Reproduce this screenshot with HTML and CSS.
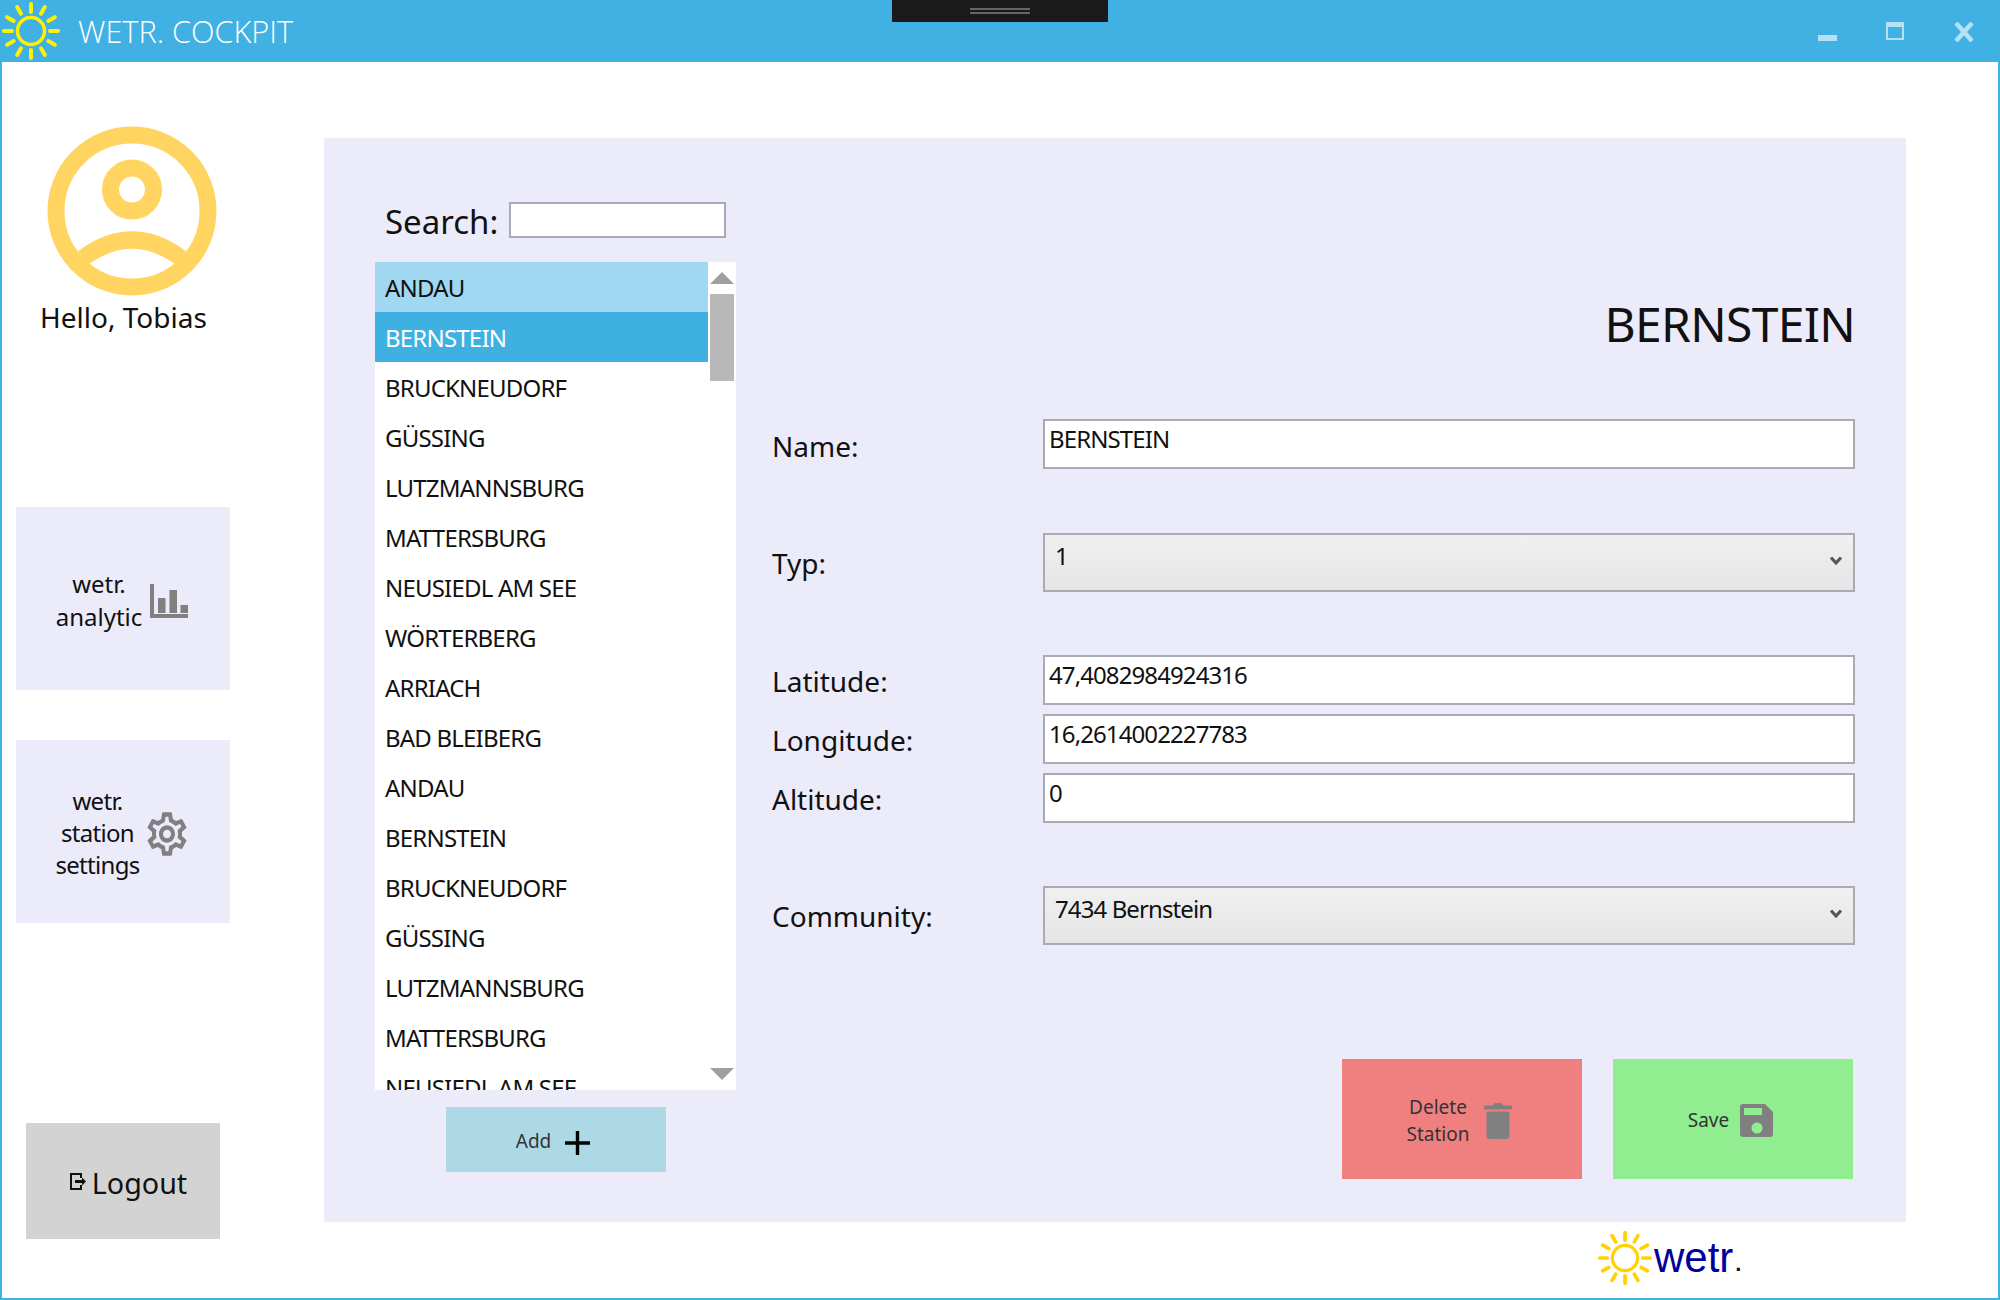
FILE: index.html
```html
<!DOCTYPE html>
<html lang="en">
<head>
    <meta charset="UTF-8">
    <meta name="viewport" content="width=device-width, initial-scale=1.0">
    <title>Wetr. Cockpit</title>
    <link rel="stylesheet" href="styles.css">
</head>
<body>
    <svg class="defs" width="0" height="0">
        <symbol id="sun" viewBox="0 0 62 62">
            <circle cx="31" cy="31" r="13.5" fill="none" stroke="currentColor" stroke-width="3.5"/>
            <path fill="none" stroke="currentColor" stroke-width="4" stroke-linecap="round" d="M31 4V12M31 50V58M4 31H12M50 31H58M41 13.7L44.8 7.1M21 13.7L17.200 7.1M41 48.3L44.8 54.9M21 48.3L17.200 54.9M13.7 21L7.1 17.200M13.7 41L7.1 44.8M48.3 21L54.9 17.200M48.3 41L54.9 44.8"/>
        </symbol>
    </svg>

    <div class="window">
        <header class="titlebar">
            <svg class="title-sun"><use href="#sun"/></svg>
            <span class="title-text">WETR. COCKPIT</span>
            <div class="window-buttons">
                <span class="win-min"></span>
                <span class="win-max"></span>
                <svg class="win-close" width="22" height="20" viewBox="0 0 22 20"><path d="M3 1L19 19M19 1L3 19" fill="none" stroke="#b5e1f5" stroke-width="4.5"/></svg>
            </div>
        </header>
        <div class="dock-handle"><span></span><span></span></div>

        <div class="content">
            <aside class="sidebar">
                <svg class="avatar" width="170" height="170" viewBox="0 0 170 170" fill="none" stroke="#ffd460" stroke-width="17">
                    <circle cx="85" cy="85" r="76"/>
                    <circle cx="85" cy="63.5" r="21.5"/>
                    <path d="M36 132Q85 96 134 132"/>
                </svg>
                <div class="greeting">Hello, Tobias</div>

                <div class="tile tile-analytic">
                    <div class="tile-text">wetr.<br>analytic</div>
                    <svg width="38" height="34" viewBox="0 0 38 34" fill="#808080"><path d="M0 0H4V30H38V34H0ZM8 14H15.5V29H8ZM19.500 6H27V29H19.500ZM30.500 21H38V29H30.500Z"/></svg>
                </div>
                <div class="tile tile-settings">
                    <div class="tile-text">wetr.<br>station<br>settings</div>
                    <svg width="48" height="52" viewBox="0 0 24 24" preserveAspectRatio="none" fill="#808080"><path d="M19.43 12.98c.04-.32.07-.64.07-.98 0-.34-.03-.66-.07-.98l2.11-1.65c.19-.15.24-.42.12-.64l-2-3.46c-.09-.16-.26-.25-.44-.25-.06 0-.12.01-.17.03l-2.49 1c-.52-.4-1.08-.73-1.69-.98l-.38-2.65C14.46 2.18 14.25 2 14 2h-4c-.25 0-.46.18-.49.42l-.38 2.65c-.61.25-1.17.59-1.69.98l-2.49-1c-.06-.02-.12-.03-.18-.03-.17 0-.34.09-.43.25l-2 3.46c-.13.22-.07.49.12.64l2.11 1.65c-.04.32-.07.65-.07.98 0 .33.03.66.07.98l-2.11 1.65c-.19.15-.24.42-.12.64l2 3.46c.09.16.26.25.44.25.06 0 .12-.01.17-.03l2.49-1c.52.4 1.08.73 1.69.98l.38 2.65c.03.24.24.42.49.42h4c.25 0 .46-.18.49-.42l.38-2.65c.61-.25 1.17-.59 1.69-.98l2.49 1c.06.02.12.03.18.03.17 0 .34-.09.43-.25l2-3.46c.12-.22.07-.49-.12-.64l-2.11-1.65zm-1.98-1.71c.04.31.05.52.05.73 0 .21-.02.43-.05.73l-.14 1.13.89.7 1.08.84-.7 1.21-1.27-.51-1.04-.42-.9.68c-.43.32-.84.56-1.25.73l-1.06.43-.16 1.13-.2 1.35h-1.4l-.19-1.35-.16-1.13-1.06-.43c-.43-.18-.83-.41-1.23-.71l-.91-.7-1.06.43-1.27.51-.7-1.21 1.08-.84.89-.7-.14-1.13c-.03-.31-.05-.54-.05-.74s.02-.43.05-.73l.14-1.13-.89-.7-1.08-.84.7-1.21 1.27.51 1.04.42.9-.68c.43-.32.84-.56 1.25-.73l1.06-.43.16-1.13.2-1.35h1.39l.19 1.35.16 1.13 1.06.43c.43.18.83.41 1.23.71l.91.7 1.06-.43 1.27-.51.7 1.21-1.07.85-.89.7.14 1.13zM12 8c-2.21 0-4 1.79-4 4s1.79 4 4 4 4-1.79 4-4-1.79-4-4-4zm0 6c-1.1 0-2-.9-2-2s.9-2 2-2 2 .9 2 2-.9 2-2 2z"/></svg>
                </div>
                <div class="logout">
                    <svg width="17" height="17" viewBox="0 0 17 17" fill="none" stroke="#111" stroke-width="2"><path d="M12 5V1H2V16H12V12"/><path d="M6 8.5H14" stroke-width="3"/><path d="M13 4.5L17 8.5L13 12.5Z" fill="#111" stroke="none"/></svg>
                    <span>Logout</span>
                </div>
            </aside>

            <main class="main">
                <section class="panel">
                    <div class="stations">
                        <div class="search">
                            <label for="search">Search:</label>
                            <input id="search" type="text">
                        </div>
                        <div class="list">
                            <ul class="list-items">
                                <li class="hovered">ANDAU</li>
                                <li class="selected">BERNSTEIN</li>
                                <li>BRUCKNEUDORF</li>
                                <li>GÜSSING</li>
                                <li>LUTZMANNSBURG</li>
                                <li>MATTERSBURG</li>
                                <li>NEUSIEDL AM SEE</li>
                                <li>WÖRTERBERG</li>
                                <li>ARRIACH</li>
                                <li>BAD BLEIBERG</li>
                                <li>ANDAU</li>
                                <li>BERNSTEIN</li>
                                <li>BRUCKNEUDORF</li>
                                <li>GÜSSING</li>
                                <li>LUTZMANNSBURG</li>
                                <li>MATTERSBURG</li>
                                <li>NEUSIEDL AM SEE</li>
                            </ul>
                            <div class="scrollbar">
                                <span class="arrow-up"></span>
                                <span class="thumb"></span>
                                <span class="arrow-down"></span>
                            </div>
                        </div>
                        <div class="btn btn-add">
                            <span>Add</span>
                            <svg width="25" height="24" viewBox="0 0 25 24"><path d="M12.5 0V24M0 12H25" stroke="#000" stroke-width="3.4"/></svg>
                        </div>
                    </div>

                    <div class="details">
                        <h1 class="station-name">BERNSTEIN</h1>
                        <div class="row row-name">
                            <label>Name:</label>
                            <input class="field" type="text" value="BERNSTEIN">
                        </div>
                        <div class="row row-group">
                            <label>Typ:</label>
                            <div class="select"><span>1</span><svg width="12" height="9" viewBox="0 0 12 9"><path d="M1 1.5L6 7L11 1.5" fill="none" stroke="#555" stroke-width="3"/></svg></div>
                        </div>
                        <div class="row row-group">
                            <label>Latitude:</label>
                            <input class="field" type="text" value="47,4082984924316">
                        </div>
                        <div class="row row-close">
                            <label>Longitude:</label>
                            <input class="field" type="text" value="16,2614002227783">
                        </div>
                        <div class="row row-close">
                            <label>Altitude:</label>
                            <input class="field" type="text" value="0">
                        </div>
                        <div class="row row-group">
                            <label>Community:</label>
                            <div class="select"><span>7434 Bernstein</span><svg width="12" height="9" viewBox="0 0 12 9"><path d="M1 1.5L6 7L11 1.5" fill="none" stroke="#555" stroke-width="3"/></svg></div>
                        </div>
                        <div class="actions">
                            <div class="btn btn-delete">
                                <span class="btn-text">Delete<br>Station</span>
                                <svg width="28" height="36" viewBox="0 0 28 36" fill="#808080"><path d="M0 2.500H9L10.500 0H17.500L19 2.500H28V6.500H0ZM2.500 8.500H25.500V33Q25.500 36 22.500 36H5.500Q2.500 36 2.500 33Z"/></svg>
                            </div>
                            <div class="btn btn-save">
                                <span class="btn-text">Save</span>
                                <svg width="33" height="33" viewBox="0 0 33 33"><path fill="#808080" fill-rule="evenodd" d="M3 0H25L33 8V30Q33 33 30 33H3Q0 33 0 30V3Q0 0 3 0ZM4 4V11H22V4ZM17 18.500A5.500 5.500 0 1 0 17 29.500A5.500 5.500 0 1 0 17 18.500Z"/></svg>
                            </div>
                        </div>
                    </div>
                </section>
                <div class="brand">
                    <svg class="brand-sun"><use href="#sun"/></svg>
                    <span class="brand-name">wetr</span><span class="brand-dot">.</span>
                </div>
            </main>
        </div>
    </div>
</body>
</html>
```

FILE: styles.css
```css
* {
    box-sizing: border-box;
}
body {
    margin: 0;
    font-family: "Noto Sans", "Open Sans", sans-serif;
    color: #111;
    background: white;
}
.defs {
    position: absolute;
}
.window {
    position: relative;
    width: 2000px;
    height: 1300px;
    overflow: hidden;
    border: 2px solid #41b0e3;
    border-top: none;
}
.titlebar {
    display: flex;
    align-items: center;
    height: 62px;
    margin: 0 -2px;
    background: #41b0e3;
}
.title-sun {
    width: 62px;
    height: 62px;
    color: #fff000;
}
.title-text {
    margin-left: 16px;
    font-family: "Open Sans", sans-serif;
    font-size: 30.7px;
    font-weight: 300;
    color: white;
}
.window-buttons {
    display: flex;
    align-items: flex-start;
    margin-left: auto;
    padding: 0 25px 0 0;
    height: 42px;
    margin-top: 20px;
}
.win-min {
    width: 19px;
    height: 6px;
    margin-top: 15px;
    background: #b5e1f5;
}
.win-max {
    width: 18px;
    height: 18px;
    margin: 2px 0 0 49px;
    border: 2px solid #b5e1f5;
    border-top-width: 5px;
}
.win-close {
    margin: 2px 0 0 49px;
}
.dock-handle {
    position: absolute;
    top: 0;
    left: 890px;
    display: flex;
    flex-direction: column;
    align-items: center;
    gap: 2px;
    width: 216px;
    height: 22px;
    padding-top: 8px;
    background: #1a1a1a;
}
.dock-handle span {
    width: 60px;
    height: 2px;
    background: #666;
}
.content {
    display: flex;
}
.sidebar {
    display: flex;
    flex-direction: column;
    width: 322px;
}
.avatar {
    margin: 64px 0 0 45px;
    overflow: visible;
}
.greeting {
    margin: 1px 0 0 38px;
    font-size: 28px;
    line-height: 40px;
}
.tile {
    display: flex;
    align-items: center;
    justify-content: center;
    width: 214px;
    height: 183px;
    margin-left: 14px;
    background: #ecebf9;
    font-size: 24px;
    line-height: 33px;
    text-align: center;
}
.tile-analytic {
    gap: 8px;
    margin-top: 170px;
    padding-right: 2px;
}
.tile-analytic svg {
    margin-top: 5px;
}
.tile-settings {
    gap: 3px;
    margin-top: 50px;
    line-height: 32px;
}
.tile-settings svg {
    margin-top: 4px;
}
.tile-settings .tile-text {
    letter-spacing: -0.7px;
}
.tile-text {
    margin-top: 2px;
}
.logout {
    display: flex;
    align-items: center;
    justify-content: center;
    gap: 6px;
    width: 194px;
    height: 116px;
    margin: 200px 0 0 24px;
    padding-left: 10px;
    background: #d3d3d3;
    font-size: 28.7px;
}
.logout span {
    margin-top: 2px;
}
.main {
    flex: 1;
    padding-top: 76px;
}
.panel {
    display: flex;
    gap: 36px;
    width: 1582px;
    height: 1084px;
    padding: 64px 51px 43px;
    background: #ecebf9;
}
.stations {
    display: flex;
    flex-direction: column;
    width: 361px;
}
.search {
    display: flex;
    align-items: center;
    gap: 11px;
    height: 36px;
    padding-left: 10px;
    font-size: 33px;
}
.search label {
    padding-top: 2px;
}
.search input {
    width: 217px;
    height: 36px;
    border: 2px solid #aaaab4;
    background: white;
}
.list {
    display: flex;
    height: 828px;
    margin-top: 24px;
    background: white;
    overflow: hidden;
}
.list-items {
    flex: 1;
    margin: 0;
    padding: 0;
    list-style: none;
    overflow: hidden;
}
.list-items li {
    height: 50px;
    padding: 1px 0 0 10px;
    font-size: 24px;
    letter-spacing: -0.8px;
    line-height: 50px;
    white-space: nowrap;
}
.list-items .hovered {
    background: #9fd8f0;
}
.list-items .selected {
    background: #3fb0e2;
    color: white;
}
.scrollbar {
    display: flex;
    flex-direction: column;
    width: 28px;
    padding: 10px 2px 10px 2px;
}
.arrow-up,
.arrow-down {
    width: 0;
    height: 0;
    border-left: 12px solid transparent;
    border-right: 12px solid transparent;
}
.arrow-up {
    border-bottom: 12px solid #a0a0a0;
}
.arrow-down {
    margin-top: auto;
    border-top: 12px solid #a0a0a0;
}
.thumb {
    height: 87px;
    margin-top: 10px;
    background: #b8b8b8;
}
.btn {
    display: flex;
    align-items: center;
    justify-content: center;
    font-size: 19px;
    color: #333;
}
.btn-add {
    gap: 14px;
    width: 220px;
    height: 65px;
    margin: 17px 0 0 71px;
    padding: 2px 6px 0 0;
    background: #add8e6;
}
.btn-add svg {
    margin-top: 5px;
}
.details {
    display: flex;
    flex-direction: column;
    flex: 1;
}
.station-name {
    margin: 90px 0 63px;
    font-size: 48px;
    font-weight: 400;
    letter-spacing: -0.7px;
    line-height: 64px;
    text-align: right;
}
.row {
    display: flex;
    align-items: center;
}
.row label {
    width: 271px;
    padding-top: 1px;
    font-size: 28px;
}
.row-name {
    margin-bottom: 1px;
}
.row-name label {
    padding-top: 4px;
}
.row-group {
    margin-top: 63px;
}
.row-close {
    margin-top: 9px;
}
.field {
    flex: 1;
    height: 50px;
    padding: 0 4px 12px;
    border: 2px solid #aaaab4;
    background: white;
    font-family: inherit;
    font-size: 24px;
    letter-spacing: -0.9px;
    color: #111;
}
.select {
    display: flex;
    align-items: center;
    justify-content: space-between;
    flex: 1;
    height: 59px;
    padding: 0 11px 14px 10px;
    border: 2px solid #aaaab4;
    background: linear-gradient(#f0f0f0, #e5e5e5);
    font-size: 24px;
    letter-spacing: -0.9px;
}
.select svg {
    margin-top: 9px;
}
.actions {
    display: flex;
    justify-content: flex-end;
    gap: 31px;
    margin-top: auto;
    padding-right: 2px;
}
.btn-delete,
.btn-save {
    width: 240px;
    height: 120px;
    line-height: 27px;
    text-align: center;
}
.btn-delete {
    gap: 15px;
    padding: 4px 5px 0 0;
    background: #f08080;
}
.btn-save {
    gap: 11px;
    padding: 2px 5px 0 0;
    background: #90ee90;
}
.brand {
    display: flex;
    align-items: center;
    margin: 9px 0 0 1272px;
    height: 54px;
}
.brand-sun {
    width: 58px;
    height: 58px;
    color: #ffd200;
}
.brand-name {
    font-family: "Liberation Sans", sans-serif;
    font-size: 42px;
    color: #00009c;
}
.brand-dot {
    font-family: "Liberation Sans", sans-serif;
    font-size: 22px;
    font-weight: bold;
    margin: 12px 0 0 2px;
    color: #111;
}
```
